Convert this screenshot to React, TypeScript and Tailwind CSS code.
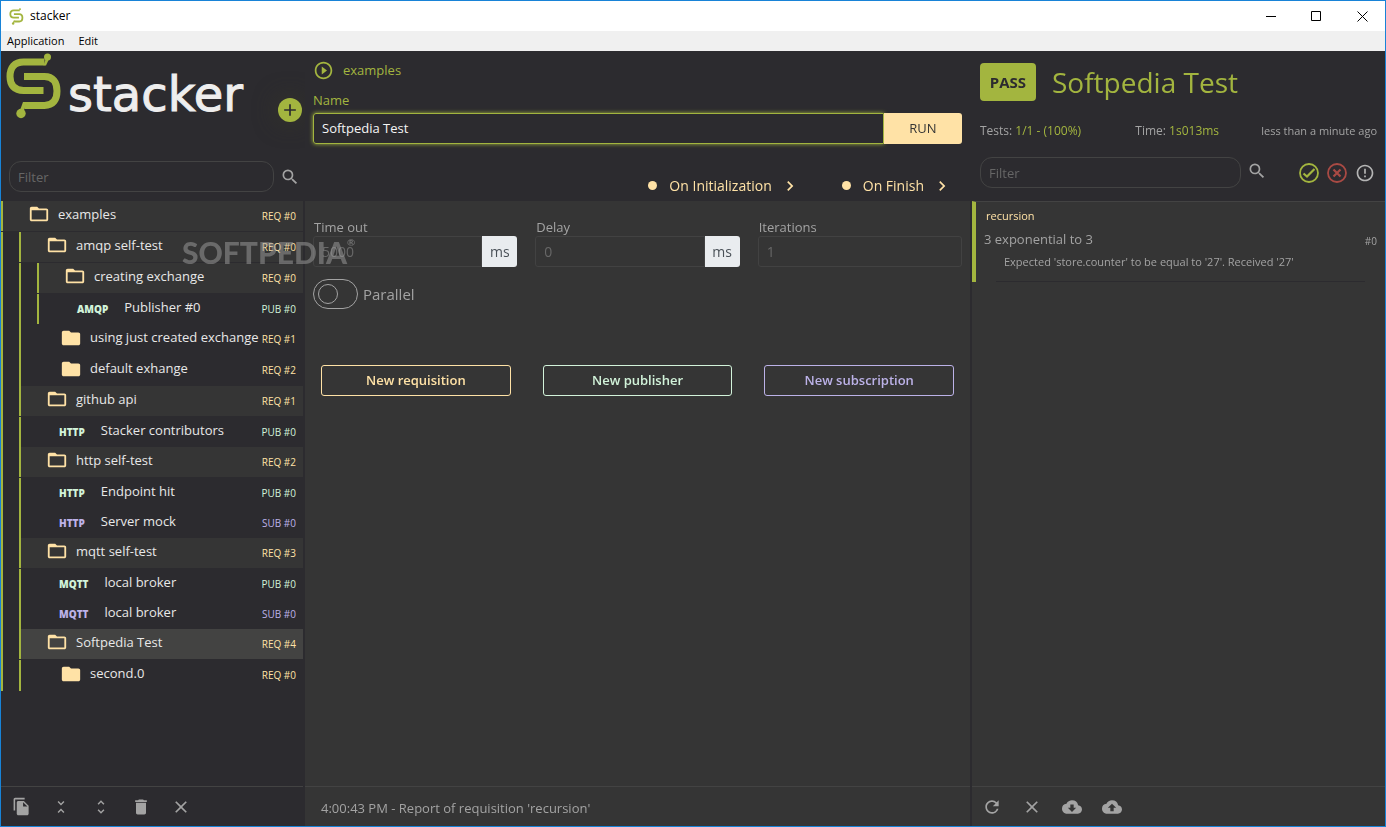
import { ReactNode, useState } from "react";
import clsx from "clsx";
import {
  MdAdd,
  MdBackup,
  MdClose,
  MdCloudDownload,
  MdDelete,
  MdErrorOutline,
  MdFileCopy,
  MdFolder,
  MdFolderOpen,
  MdChevronRight,
  MdPlayCircleOutline,
  MdRefresh,
  MdSearch,
  MdUnfoldLess,
  MdUnfoldMore,
} from "react-icons/md";

type Kind = "REQ" | "PUB" | "SUB";

type Item = {
  name: string;
  kind: Kind;
  index: number;
  protocol?: string;
  selected?: boolean;
  children?: Item[];
};

const TREE: Item = {
  name: "examples",
  kind: "REQ",
  index: 0,
  children: [
    {
      name: "amqp self-test",
      kind: "REQ",
      index: 0,
      children: [
        {
          name: "creating exchange",
          kind: "REQ",
          index: 0,
          children: [{ name: "Publisher #0", kind: "PUB", index: 0, protocol: "AMQP" }],
        },
        { name: "using just created exchange", kind: "REQ", index: 1 },
        { name: "default exhange", kind: "REQ", index: 2 },
      ],
    },
    {
      name: "github api",
      kind: "REQ",
      index: 1,
      children: [{ name: "Stacker contributors", kind: "PUB", index: 0, protocol: "HTTP" }],
    },
    {
      name: "http self-test",
      kind: "REQ",
      index: 2,
      children: [
        { name: "Endpoint hit", kind: "PUB", index: 0, protocol: "HTTP" },
        { name: "Server mock", kind: "SUB", index: 0, protocol: "HTTP" },
      ],
    },
    {
      name: "mqtt self-test",
      kind: "REQ",
      index: 3,
      children: [
        { name: "local broker", kind: "PUB", index: 0, protocol: "MQTT" },
        { name: "local broker", kind: "SUB", index: 0, protocol: "MQTT" },
      ],
    },
    {
      name: "Softpedia Test",
      kind: "REQ",
      index: 4,
      selected: true,
      children: [{ name: "second.0", kind: "REQ", index: 0 }],
    },
  ],
};

function getKindColor(kind: Kind) {
  switch (kind) {
    case "PUB":
      return "text-[#d2f3da]";
    case "SUB":
      return "text-[#bcb2e8]";
    default:
      return "text-[#ffe2a6]";
  }
}

function Tag({ item }: { item: Item }) {
  return (
    <span className={clsx("ml-auto pt-1 pr-[7px] text-[10px] whitespace-nowrap", getKindColor(item.kind))}>
      {item.kind} #{item.index}
    </span>
  );
}

function TreeItem({ item }: { item: Item }) {
  const color = getKindColor(item.kind);

  if (item.children) {
    return (
      <li>
        <button
          className={clsx(
            "mb-px flex h-[30px] w-full items-center border-l-2 border-[#a3b53f] pb-1 pl-[25px] text-left",
            item.selected ? "bg-[#434342]" : "bg-[#353535]"
          )}
        >
          <MdFolderOpen className={clsx("mr-2 size-[22px] shrink-0", color)} />
          <span className="pt-[2px] whitespace-nowrap">{item.name}</span>
          <Tag item={item} />
        </button>
        <ul className="border-l-2 border-[#a3b53f]">
          {item.children.map((child, i) => (
            <div key={i} className={clsx(child.children && "pl-4")}>
              <TreeItem item={child} />
            </div>
          ))}
        </ul>
      </li>
    );
  }

  return (
    <li>
      <button
        className={clsx(
          "flex w-full items-center pb-1 text-left",
          item.protocol ? "h-[30px] pl-[38px]" : "h-[31px] pl-[39px]"
        )}
      >
        {item.protocol ? (
          <span className={clsx("mr-4 pt-1 text-[10px] font-extrabold", color)}>{item.protocol}</span>
        ) : (
          <MdFolder className={clsx("mr-2 size-[22px] shrink-0", color)} />
        )}
        <span className="pt-px whitespace-nowrap">{item.name}</span>
        <Tag item={item} />
      </button>
    </li>
  );
}

function Mark({ className }: { className?: string }) {
  return (
    <svg viewBox="0 0 56 66" className={className} aria-hidden="true">
      <g fill="none" stroke="#a3b53f" strokeWidth="7">
        <path d="M38.500 9H17.500C8.500 9 4 14.500 4 23.500S8.500 37.500 17.500 37.500H37.500" />
        <path d="M18 23.500H38.500C47 23.500 51 29 51 38S47 52.500 38.500 52.500H18.500" />
      </g>
      <path d="M37.500 12.500 41 2 44 4 40 12.500Z" fill="#a3b53f" />
      <path d="M17 49H21L17 60H13Z" fill="#a3b53f" />
      <circle cx="41.500" cy="4" r="3.500" fill="#a3b53f" />
      <circle cx="15" cy="60.500" r="4.700" fill="#a3b53f" />
    </svg>
  );
}

function IconButton({ label, children }: { label: string; children: ReactNode }) {
  return (
    <button aria-label={label} className="flex size-10 items-center justify-center text-[#a3a3a3]">
      {children}
    </button>
  );
}

function NumberField(props: { id: string; label: string; value: string; unit?: string }) {
  return (
    <div className="flex-1">
      <label htmlFor={props.id} className="block pb-px pl-px text-[13px] leading-4 text-[#a3a3a3]">
        {props.label}
      </label>
      <div className="flex h-[31px]">
        <input
          id={props.id}
          placeholder={props.value}
          className={clsx(
            "w-full min-w-0 border border-[#424242] px-2 text-sm outline-none placeholder:text-[#686868]",
            props.unit ? "rounded-l-[3px]" : "rounded-[3px]"
          )}
        />
        {props.unit && (
          <span className="flex w-[35px] shrink-0 items-center justify-center rounded-r-[3px] bg-[#e9ecef] text-sm text-[#495057]">
            {props.unit}
          </span>
        )}
      </div>
    </div>
  );
}

function Sidebar() {
  return (
    <aside className="flex min-w-0 flex-col bg-[#2c2b2f]">
      <header className="flex h-[150px] flex-col">
        <div className="flex flex-1 items-start pl-[5px]">
          <Mark className="mt-[2px] h-[66px] w-14" />
          <h1 className="mt-3 ml-[6px] font-['DejaVu_Sans'] text-[48px] leading-[62px] text-[#eeeeee] [-webkit-text-stroke:1px_#eeeeee]">
            stacker
          </h1>
          <button
            aria-label="Add"
            className="mt-[47px] mr-px ml-auto flex size-6 shrink-0 items-center justify-center rounded-full bg-[#a3b53f] text-[#2c2b2f] shadow-[0_0_24px_#353529]"
          >
            <MdAdd className="size-5" />
          </button>
        </div>
        <div className="mb-[9px] flex items-center pl-2">
          <input
            aria-label="Filter items"
            placeholder="Filter"
            className="h-[31px] min-w-0 flex-1 rounded-xl border border-[#434343] px-2 text-[13px] outline-none placeholder:text-[#666666]"
          />
          <button aria-label="Search" className="mr-[3px] ml-[6px] text-[#a3a3a3]">
            <MdSearch className="size-5" />
          </button>
        </div>
      </header>
      <ul className="flex-1 text-[13px] text-[#e8e8e8]">
        <TreeItem item={TREE} />
      </ul>
      <footer className="flex h-10 items-center border-t border-[#434343]">
        <IconButton label="Duplicate">
          <MdFileCopy className="size-[19px]" />
        </IconButton>
        <IconButton label="Collapse">
          <MdUnfoldLess className="size-[18px]" />
        </IconButton>
        <IconButton label="Expand">
          <MdUnfoldMore className="size-[18px]" />
        </IconButton>
        <IconButton label="Delete">
          <MdDelete className="size-5" />
        </IconButton>
        <IconButton label="Close">
          <MdClose className="size-5" />
        </IconButton>
      </footer>
    </aside>
  );
}

function Editor() {
  const [name, setName] = useState("Softpedia Test");

  return (
    <main className="flex min-w-0 flex-col bg-[#353535]">
      <header className="flex h-[150px] flex-col bg-[#2c2b2f] px-2">
        <div className="mt-2 flex h-[22px] items-center gap-[9px] text-[13px] text-[#a3b53f]">
          <MdPlayCircleOutline className="size-[21px]" />
          <span className="pt-px">examples</span>
        </div>
        <label htmlFor="name" className="mt-2 mb-[2px] text-[13px] leading-[22px] text-[#a3b53f]">
          Name
        </label>
        <div className="flex h-[31px]">
          <input
            id="name"
            autoFocus
            value={name}
            onChange={(e) => setName(e.target.value)}
            className="min-w-0 flex-1 rounded-l-[3px] border border-[#a3b53f] px-2 text-[13px] text-[#f5f5f5] shadow-[0_0_4px_#a3b53f] outline-none"
          />
          <button className="w-[78px] rounded-r-[3px] bg-[#ffe2a6] text-[13px] text-[#353535]">RUN</button>
        </div>
        <nav className="mt-auto mb-[5px] flex justify-end gap-[42px] pr-[10px] text-sm text-[#ffe2a6]">
          {["On Initialization", "On Finish"].map((label) => (
            <button key={label} className="flex items-center">
              <span className="mr-3 mb-[2px] size-[9px] rounded-full bg-[#ffe2a6]" />
              {label}
              <MdChevronRight className="ml-2 size-5" />
            </button>
          ))}
        </nav>
      </header>
      <section className="flex-1 px-2 pt-[18px]">
        <div className="flex gap-[18px]">
          <NumberField id="timeout" label="Time out" value="5000" unit="ms" />
          <NumberField id="delay" label="Delay" value="0" unit="ms" />
          <NumberField id="iterations" label="Iterations" value="1" />
        </div>
        <label className="mt-3 flex items-center gap-[5px] text-[15px] text-[#a3a3a3]">
          <input type="checkbox" className="peer sr-only" />
          <span className="flex h-[30px] w-[45px] rounded-full border border-[#a3a3a3] p-1">
            <span className="size-5 rounded-full border border-[#a3a3a3]" />
          </span>
          Parallel
        </label>
        <div className="mt-14 flex gap-8 px-2 text-[13px] font-semibold">
          <button className="h-[31px] flex-1 rounded-[3px] border border-[#ffe2a6] text-[#ffe2a6]">
            New requisition
          </button>
          <button className="h-[31px] flex-1 rounded-[3px] border border-[#d2f3da] text-[#d2f3da]">
            New publisher
          </button>
          <button className="h-[31px] flex-1 rounded-[3px] border border-[#bcb2e8] text-[#bcb2e8]">
            New subscription
          </button>
        </div>
      </section>
      <footer className="flex h-10 items-center border-t border-[#434343] px-4 pt-1 text-[13px] text-[#a3a3a3]">
        4:00:43 PM - Report of requisition 'recursion'
      </footer>
    </main>
  );
}

function Report() {
  return (
    <section className="flex min-w-0 flex-col bg-[#353535]">
      <header className="flex h-[150px] flex-col bg-[#2c2b2f] px-2">
        <div className="mt-3 flex items-center gap-4">
          <span className="flex h-[38px] w-14 items-center justify-center rounded bg-[#a3b53f] text-[15px] font-bold text-[#2c2b2f]">
            PASS
          </span>
          <h2 className="text-[28px] leading-[38px] text-[#a3b53f]">Softpedia Test</h2>
        </div>
        <div className="mt-5 flex justify-between text-xs leading-5 text-[#a3a3a3]">
          <span>
            Tests: <span className="font-medium text-[#a3b53f]">1/1 - (100%)</span>
          </span>
          <span className="pl-3">
            Time: <span className="text-[#a3b53f]">1s013ms</span>
          </span>
          <span className="text-[11px]">less than a minute ago</span>
        </div>
        <div className="mt-auto mb-[13px] flex items-center pr-[2px]">
          <input
            aria-label="Filter report"
            placeholder="Filter"
            className="h-[31px] min-w-0 flex-1 rounded-xl border border-[#434343] px-2 text-[13px] outline-none placeholder:text-[#666666]"
          />
          <button aria-label="Search report" className="mr-8 mb-1 ml-[6px] text-[#a3a3a3]">
            <MdSearch className="size-5" />
          </button>
          <div className="flex items-center gap-2">
            <button aria-label="Passed">
              <svg viewBox="0 0 20 20" className="size-5" fill="none" stroke="#a3b53f" strokeWidth="1.800">
                <circle cx="10" cy="10" r="9" />
                <path d="M4.500 10.500 8 13.500 15.500 6" strokeWidth="2.200" />
              </svg>
            </button>
            <button aria-label="Failed">
              <svg viewBox="0 0 20 20" className="size-5" fill="none" stroke="#a94a44" strokeWidth="1.800">
                <circle cx="10" cy="10" r="9" />
                <path d="m6.500 6.500 7 7m0-7-7 7" strokeWidth="2.200" />
              </svg>
            </button>
            <button aria-label="Warnings" className="text-[#b5b5b5]">
              <MdErrorOutline className="size-5" />
            </button>
          </div>
        </div>
      </header>
      <div className="flex-1">
        <article className="flex h-[81px] flex-col border-t border-l-4 border-t-[#434343] border-l-[#a3b53f] pt-1 pr-2 pl-2 text-[#a3a3a3]">
          <h3 className="pl-[2px] text-[11px] leading-5 font-medium text-[#ffe2a6]">recursion</h3>
          <p className="flex items-center justify-between text-[13px] leading-[22px]">
            3 exponential to 3 <span className="pt-1 text-[10px]">#0</span>
          </p>
          <p className="mr-3 ml-3 flex-1 border-b border-[#2c2b2f] pl-2 text-[11px] leading-5">
            Expected 'store.counter' to be equal to '27'. Received '27'
          </p>
        </article>
      </div>
      <footer className="flex h-10 items-center border-t border-[#434343]">
        <IconButton label="Refresh">
          <MdRefresh className="size-5" />
        </IconButton>
        <IconButton label="Clear">
          <MdClose className="size-5" />
        </IconButton>
        <IconButton label="Download">
          <MdCloudDownload className="size-5" />
        </IconButton>
        <IconButton label="Upload">
          <MdBackup className="size-5" />
        </IconButton>
      </footer>
    </section>
  );
}

export default function App() {
  return (
    <div className="relative flex min-h-screen flex-col border border-[#1883d7] bg-[#2c2b2f] font-['Open_Sans',sans-serif]">
      <div className="flex h-[30px] items-center bg-white pl-2 text-xs text-black">
        <Mark className="mr-[6px] h-[17px] w-[15px]" />
        stacker
        <div className="ml-auto flex h-full">
          <button aria-label="Minimize" className="flex w-[46px] items-center justify-center">
            <svg viewBox="0 0 11 11" className="size-[11px]" stroke="#000">
              <path d="M0 5.500H10" />
            </svg>
          </button>
          <button aria-label="Maximize" className="flex w-[45px] items-center justify-center">
            <svg viewBox="0 0 11 11" className="size-[11px]" fill="none" stroke="#000">
              <path d="M.5.500H9.500V9.500H.5Z" />
            </svg>
          </button>
          <button aria-label="Close window" className="flex w-[46px] items-center justify-center">
            <svg viewBox="0 0 11 11" className="size-[11px]" stroke="#000">
              <path d="m.5.500 10 10m0-10-10 10" />
            </svg>
          </button>
        </div>
      </div>
      <div className="flex h-5 items-center gap-[14px] bg-[#f0f0f0] px-[6px] text-[11px] text-black">
        <button>Application</button>
        <button>Edit</button>
      </div>
      <div className="grid flex-1 grid-cols-[302fr_665fr_413fr] gap-x-[2px]">
        <Sidebar />
        <Editor />
        <Report />
      </div>
      <div className="pointer-events-none absolute top-[235px] left-[181px] flex font-['Lato'] text-[30px] leading-8 font-black text-[#a0a0a0]/50">
        SOFTPEDIA<span className="text-[10px] leading-3">®</span>
      </div>
    </div>
  );
}
